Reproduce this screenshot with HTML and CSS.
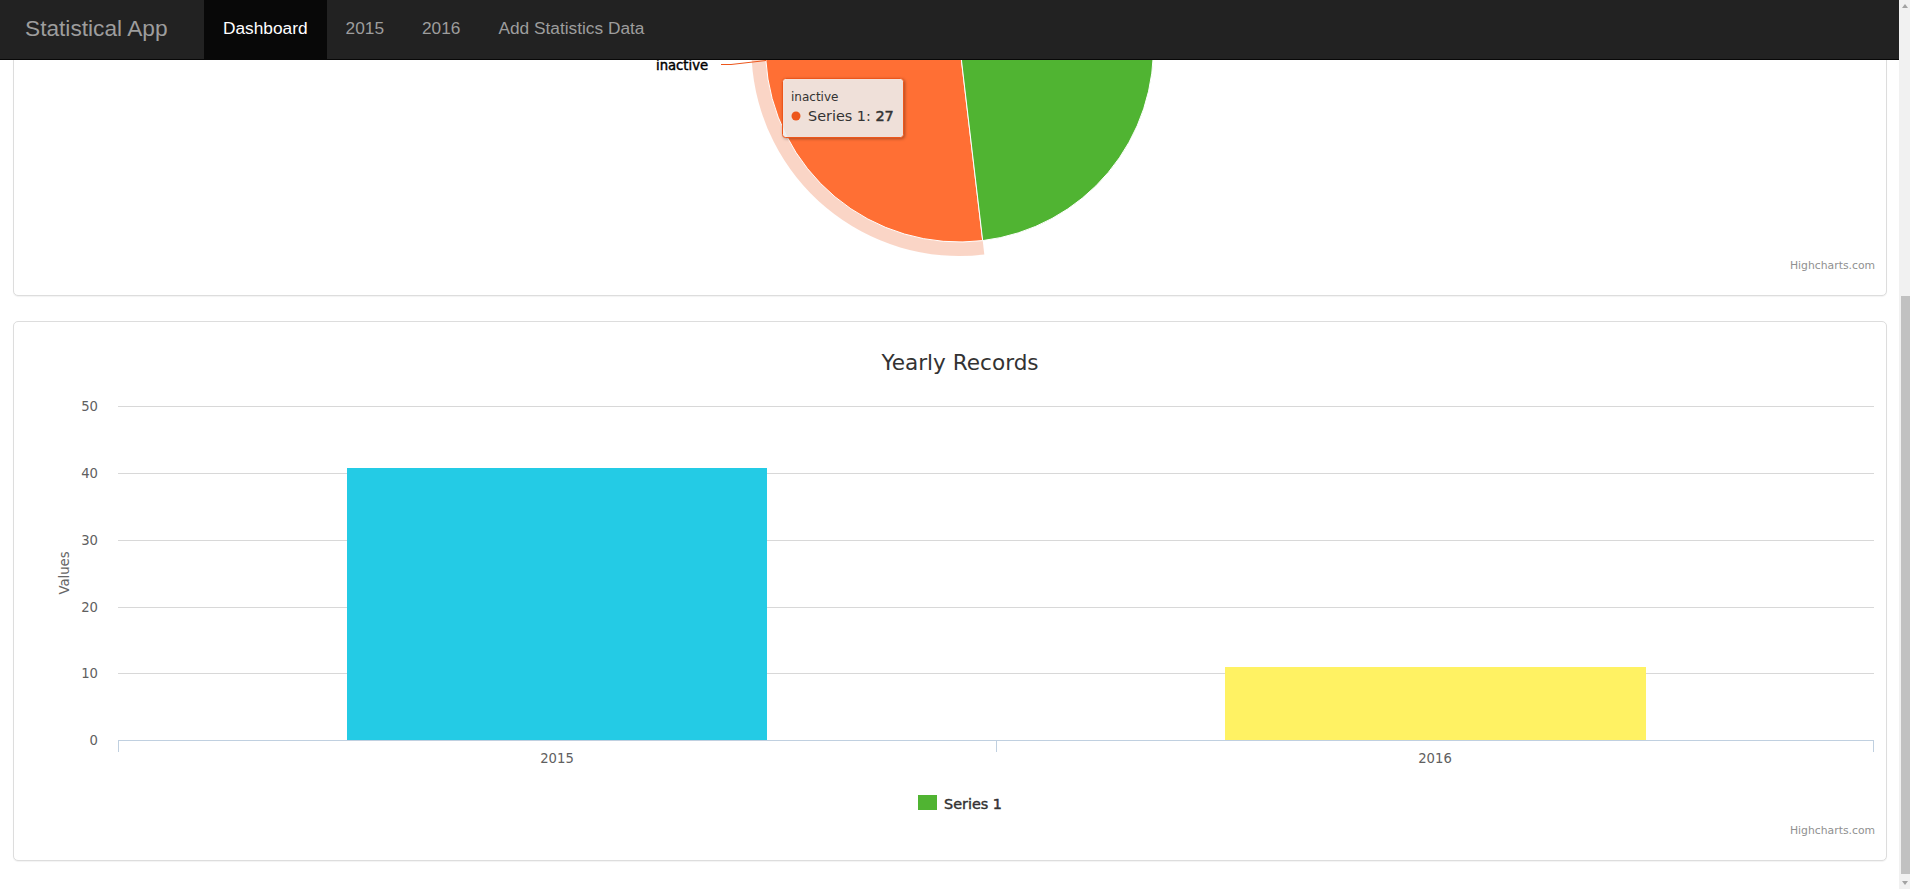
FILE: index.html
```html
<!DOCTYPE html>
<html lang="en">
<head>
<meta charset="utf-8">
<title>Statistical App</title>
<link rel="stylesheet" href="styles.css">
</head>
<body>
<div class="app">
  <div class="page">
    <nav class="navbar">
      <a class="brand" href="#">Statistical App</a>
      <ul class="nav">
        <li class="active"><a href="#">Dashboard</a></li>
        <li><a href="#">2015</a></li>
        <li><a href="#">2016</a></li>
        <li><a href="#">Add Statistics Data</a></li>
      </ul>
    </nav>

    <main class="content">
      <section class="panel panel-pie">
        <svg class="chart" width="1871" height="294" viewBox="0 0 1871 294">
          <g transform="translate(-14,-1)">
            <path class="halo" d="M 984.3 254.5 A 208 208 0 1 1 960 -160 L 960 -146 A 194 194 0 1 0 982.7 240.6 Z"/>
            <path class="slice slice-orange" d="M 960 48 L 982.7 240.6 A 194 194 0 1 1 960 -146 Z"/>
            <path class="slice slice-green" d="M 960 48 L 960 -146 A 194 194 0 0 1 982.7 240.6 Z"/>
            <path class="connector" d="M 721 64.5 L 731 64.5 L 766 60.5"/>
            <text class="hc data-label" x="656" y="70">inactive</text>
            <g class="tooltip">
              <rect class="tooltip-box" x="782.5" y="78.5" width="121" height="59" rx="3" ry="3"/>
              <text class="hc tooltip-head" x="791" y="101">inactive</text>
              <circle class="tooltip-dot" cx="796" cy="116" r="4.5"/>
              <text class="hc tooltip-body" x="808" y="121">Series 1: <tspan class="strong">27</tspan></text>
            </g>
            <text class="hc credits" x="1875" y="269">Highcharts.com</text>
          </g>
        </svg>
      </section>

      <section class="panel panel-bar">
        <svg class="chart" width="1871" height="538" viewBox="0 0 1871 538">
          <g transform="translate(-14,-322)">
            <text class="hc chart-title" x="960" y="370">Yearly Records</text>

            <g class="grid">
              <path d="M 118 406.5 L 1874 406.5"/>
              <path d="M 118 473.5 L 1874 473.5"/>
              <path d="M 118 540.5 L 1874 540.5"/>
              <path d="M 118 607.5 L 1874 607.5"/>
              <path d="M 118 673.5 L 1874 673.5"/>
            </g>

            <g class="y-labels">
              <text class="hc axis-label" x="98" y="411">50</text>
              <text class="hc axis-label" x="98" y="478">40</text>
              <text class="hc axis-label" x="98" y="545">30</text>
              <text class="hc axis-label" x="98" y="612">20</text>
              <text class="hc axis-label" x="98" y="678">10</text>
              <text class="hc axis-label" x="98" y="745">0</text>
            </g>
            <text class="hc axis-title" transform="translate(69,573) rotate(-90)" x="0" y="0">Values</text>

            <rect class="bar bar-2015" x="347" y="468" width="420" height="272"/>
            <rect class="bar bar-2016" x="1225" y="667" width="421" height="73"/>

            <path class="x-axis" d="M 118 740.5 L 1874 740.5"/>
            <path class="x-tick" d="M 118.5 740 L 118.5 752 M 996.5 740 L 996.5 752 M 1873.5 740 L 1873.5 752"/>
            <text class="hc axis-label x-label" x="557" y="763">2015</text>
            <text class="hc axis-label x-label" x="1435" y="763">2016</text>

            <rect class="legend-symbol" x="918" y="795" width="19" height="15"/>
            <text class="hc legend-item" x="944" y="809">Series 1</text>

            <text class="hc credits" x="1875" y="834">Highcharts.com</text>
          </g>
        </svg>
      </section>
    </main>
  </div>

  <div class="scrollbar">
    <span class="arrow arrow-up"></span>
    <div class="track"><div class="thumb"></div></div>
    <span class="arrow arrow-down"></span>
  </div>
</div>
</body>
</html>
```

FILE: styles.css
```css
html, body {
  margin: 0;
  padding: 0;
  background: #fff;
}

body {
  width: 1910px;
  height: 889px;
  overflow: hidden;
  font-family: "Liberation Sans", Arial, sans-serif;
}

.app {
  display: flex;
  height: 889px;
}

.page {
  position: relative;
  flex: 1;
  overflow: hidden;
  background: #fff;
}

/* fixed top navbar overlaying the scrolled content */
.navbar {
  position: absolute;
  top: 0;
  left: 0;
  right: 0;
  z-index: 10;
  display: flex;
  height: 59px;
  background: #222;
  border-bottom: 1px solid #080808;
}

.brand {
  box-sizing: border-box;
  width: 204px;
  padding: 16px 0 0 25px;
  font-size: 22.7px;
  line-height: 24px;
  color: #9d9d9d;
  text-decoration: none;
}

.nav {
  display: flex;
  margin: 0;
  padding: 0;
  list-style: none;
}

.nav li a {
  display: block;
  height: 59px;
  box-sizing: border-box;
  padding: 18px 19px 0;
  font-size: 17.3px;
  line-height: 20px;
  color: #9d9d9d;
  text-decoration: none;
}

.nav li.active a {
  background: #080808;
  color: #fff;
}

.content {
  padding: 0 12px 0 13px;
}

.panel {
  box-sizing: border-box;
  background: #fff;
  border: 1px solid #ddd;
  border-radius: 5px;
  box-shadow: 0 1px 1px rgba(0, 0, 0, 0.05);
}

.panel-pie {
  height: 296px;
  margin-bottom: 25px;
}

.panel-bar {
  height: 540px;
}

.chart {
  display: block;
}

/* chart text */
.hc {
  font-family: "DejaVu Sans", "Liberation Sans", sans-serif;
}

.halo {
  fill: #ed561b;
  fill-opacity: 0.25;
}

.slice {
  stroke: #fff;
  stroke-width: 1;
  stroke-linejoin: round;
}

.slice-orange {
  fill: #ff6f34;
}

.slice-green {
  fill: #50b432;
}

.connector {
  fill: none;
  stroke: #ed561b;
  stroke-width: 1;
}

.data-label {
  font-size: 13.2px;
  fill: #000;
  stroke: #000;
  stroke-width: 0.45px;
}

.tooltip-box {
  fill: rgba(249, 249, 249, 0.85);
  stroke: #ed561b;
  stroke-width: 1;
  filter: drop-shadow(1px 1px 1.5px rgba(0, 0, 0, 0.35));
}

.tooltip-head {
  font-size: 12px;
  fill: #333;
}

.tooltip-dot {
  fill: #ed561b;
}

.tooltip-body {
  font-size: 14.4px;
  fill: #333;
}

.tooltip-body .strong {
  stroke: #333;
  stroke-width: 0.5px;
}

.credits {
  font-size: 10.8px;
  fill: #909090;
  text-anchor: end;
}

.chart-title {
  font-size: 21.6px;
  fill: #333;
  text-anchor: middle;
}

.grid path {
  stroke: #d8d8d8;
  stroke-width: 1;
}

.axis-label {
  font-size: 13.2px;
  fill: #606060;
  text-anchor: end;
}

.x-label {
  text-anchor: middle;
}

.axis-title {
  font-size: 13.2px;
  fill: #666;
  text-anchor: middle;
}

.bar-2015 {
  fill: #24cbe5;
}

.bar-2016 {
  fill: #fff263;
}

.x-axis,
.x-tick {
  fill: none;
  stroke: #c0d0e0;
  stroke-width: 1;
}

.legend-symbol {
  fill: #50b432;
}

.legend-item {
  font-size: 14.4px;
  fill: #333;
  stroke: #333;
  stroke-width: 0.45px;
}

/* browser scrollbar of the scrolled page */
.scrollbar {
  display: flex;
  flex-direction: column;
  align-items: center;
  width: 11px;
  background: #f1f1f1;
}

.arrow {
  display: block;
  width: 0;
  height: 0;
  border-left: 3.5px solid transparent;
  border-right: 3.5px solid transparent;
}

.arrow-up {
  margin-top: 4px;
  border-bottom: 4px solid #a3a3a3;
}

.arrow-down {
  margin-bottom: 4px;
  border-top: 4px solid #a3a3a3;
}

.track {
  flex: 1;
  align-self: stretch;
  padding: 0 0 0 2px;
}

.thumb {
  margin-top: 288px;
  height: 578px;
  background: #c1c1c1;
}
```
